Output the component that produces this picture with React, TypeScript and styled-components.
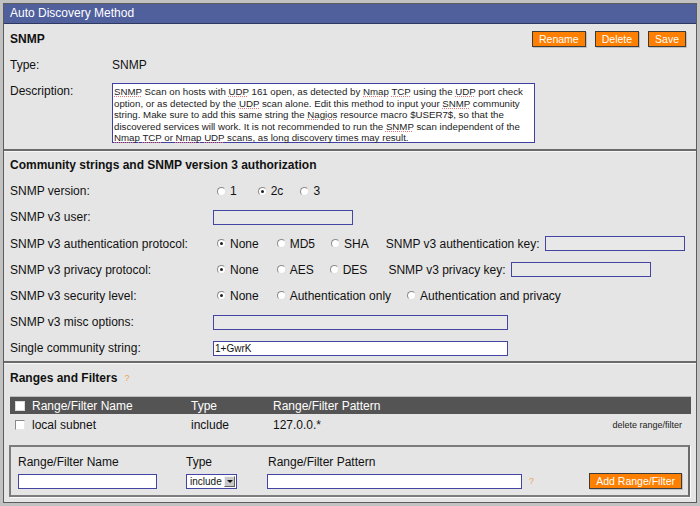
import React from "react";
import styled, { createGlobalStyle } from "styled-components";

const Global = createGlobalStyle`
  html, body { margin: 0; padding: 0; background: #e5e5e5; }
  body { font-family: "Liberation Sans", Arial, sans-serif; font-size: 12px; color: #111; }
  * { box-sizing: border-box; }
`;

const Frame = styled.div`
  width: 700px;
  height: 506px;
  border: 3px solid #c2c2c2;
  background: #e5e5e5;
`;

const Inner = styled.div`
  height: 100%;
  border: 1px solid #5c5c5c;
  display: flex;
  flex-direction: column;
`;

const TitleBar = styled.div`
  height: 20px;
  background: #50609c;
  border-bottom: 1px solid #2e3860;
  color: #fff;
  font-size: 12px;
  line-height: 19px;
  padding-left: 6px;
`;

const Section = styled.div<{ $pt: number; $pb: number; $gap?: number; $pr?: number }>`
  padding: ${(p) => p.$pt}px ${(p) => p.$pr ?? 11}px ${(p) => p.$pb}px 6px;
  display: flex;
  flex-direction: column;
  gap: ${(p) => p.$gap ?? 10}px;
`;

const Divider = styled.div`
  height: 3px;
  flex: none;
  border-top: 2px solid #6a6a6a;
  border-bottom: 1px solid #f6f6f6;
`;

const HeaderRow = styled.div`
  height: 16px;
  display: flex;
  align-items: center;
  justify-content: space-between;
`;

const Heading = styled.div`
  font-weight: bold;
  font-size: 12px;
  display: flex;
  align-items: center;
`;

const Help = styled.span`
  color: #f0a050;
  font-size: 9px;
  font-weight: normal;
  margin-left: 7px;
`;

const Buttons = styled.div`
  display: flex;
  gap: 9px;
`;

const OrangeButton = styled.button`
  height: 16px;
  padding: 0 6px;
  background: #ff8000;
  color: #fff;
  border: 1px solid #3c3c3c;
  box-shadow: 1px 1px 0 #bfbfbf;
  font-family: "Liberation Sans", Arial, sans-serif;
  font-size: 10.5px;
  line-height: 13px;
  cursor: pointer;
`;

const Row = styled.div<{ $label: number; $top?: boolean }>`
  display: grid;
  grid-template-columns: ${(p) => p.$label}px 1fr;
  align-items: ${(p) => (p.$top ? "start" : "center")};
  min-height: 16px;
  line-height: 16px;
`;

const Controls = styled.div`
  display: flex;
  align-items: center;
`;

const DescBox = styled.div`
  width: 423px;
  height: 60px;
  border: 1px solid #4040a4;
  background: #fff;
  font-size: 9.7px;
  line-height: 11.6px;
  padding: 2px 1px;
  white-space: nowrap;
  color: #222;
`;

const Spell = styled.span`
  text-decoration: underline dotted #e87878;
  text-decoration-thickness: 1px;
  text-underline-offset: 1px;
`;

const TextInput = styled.input<{ $w: number; $white?: boolean; $ml?: number }>`
  width: ${(p) => p.$w}px;
  height: 15px;
  margin-left: ${(p) => p.$ml ?? 0}px;
  border: 1px solid #4444a2;
  background: ${(p) => (p.$white ? "#fff" : "#e8e8e8")};
  font-family: "Liberation Sans", Arial, sans-serif;
  font-size: 10px;
  padding: 0 1px;
  outline: none;
  color: #111;
`;

const RadioItem = styled.label<{ $gap: number }>`
  display: flex;
  align-items: center;
  margin-right: ${(p) => p.$gap}px;
`;

const RadioDot = styled.span<{ $on?: boolean }>`
  width: 9px;
  height: 9px;
  border-radius: 50%;
  background: #fff;
  border: 1px solid;
  border-color: #8a8a8a #e0e0e0 #e0e0e0 #8a8a8a;
  margin: 0 4px 0 4px;
  position: relative;
  &::after {
    content: "";
    display: ${(p) => (p.$on ? "block" : "none")};
    position: absolute;
    left: 2px;
    top: 2px;
    width: 3px;
    height: 3px;
    border-radius: 50%;
    background: #222;
  }
`;

const KeyLabel = styled.span<{ $ml: number }>`
  margin-left: ${(p) => p.$ml}px;
  margin-right: 5px;
`;

const TableWrap = styled.div`
  margin-right: -6px;
  display: flex;
  flex-direction: column;
`;

const TableHead = styled.div`
  height: 18px;
  background: #545454;
  color: #fff;
  display: grid;
  grid-template-columns: 17px 159px 82px 1fr;
  align-items: center;
  padding-left: 5px;
  border-top: 1px solid #bdbdbd;
`;

const TableRow = styled.div`
  height: 21px;
  display: grid;
  grid-template-columns: 17px 159px 82px 1fr auto;
  align-items: center;
  padding-left: 5px;
  padding-right: 9px;
`;

const Check = styled.span<{ $filled?: boolean }>`
  width: 10px;
  height: 10px;
  background: #fff;
  border: 1px solid;
  border-color: ${(p) => (p.$filled ? "#dcdcdc" : "#8a8a8a #e8e8e8 #e8e8e8 #8a8a8a")};
`;

const SmallLink = styled.span`
  font-size: 9px;
  color: #222;
`;

const AddBox = styled.div`
  margin-left: -1px;
  margin-right: -5px;
  height: 52px;
  border: 2px solid #7c7c7c;
  border-right-color: #6a6a6a;
  padding: 9px 6px 0 7px;
  display: grid;
  grid-template-columns: 168px 82px 1fr auto;
  grid-template-rows: 12px 16px;
  row-gap: 5px;
  align-items: center;
  box-shadow: 1px 1px 0 #fafafa;
`;

const AddLabel = styled.div`
  line-height: 12px;
`;

const Select = styled.div`
  width: 51px;
  height: 15px;
  border: 1px solid #4444a2;
  background: #fff;
  font-size: 10px;
  display: flex;
  align-items: center;
  justify-content: space-between;
  padding-left: 3px;
  padding-right: 1px;
`;

const SelArrow = styled.span`
  width: 11px;
  height: 11px;
  background: #c8c8c8;
  border: 1px solid;
  border-color: #f0f0f0 #606060 #606060 #f0f0f0;
  display: flex;
  align-items: center;
  justify-content: center;
  &::after {
    content: "";
    border-left: 3px solid transparent;
    border-right: 3px solid transparent;
    border-top: 3px solid #111;
  }
`;

const PatternCell = styled.div`
  display: flex;
  align-items: center;
`;

const Radio = ({ on, label, gap = 14 }: { on?: boolean; label: string; gap?: number }) => (
  <RadioItem $gap={gap}>
    <RadioDot $on={on} />
    {label}
  </RadioItem>
);

export default function App() {
  return (
    <>
      <Global />
      <Frame>
        <Inner>
          <TitleBar>Auto Discovery Method</TitleBar>
          <Section $pt={7} $pb={6} $pr={10}>
            <HeaderRow>
              <Heading>SNMP</Heading>
              <Buttons>
                <OrangeButton>Rename</OrangeButton>
                <OrangeButton>Delete</OrangeButton>
                <OrangeButton>Save</OrangeButton>
              </Buttons>
            </HeaderRow>
            <Row $label={102}>
              <span>Type:</span>
              <span>SNMP</span>
            </Row>
            <Row $label={102} $top>
              <span>Description:</span>
              <DescBox>
                <Spell>SNMP</Spell> Scan on hosts with <Spell>UDP</Spell> 161 open, as detected by <Spell>Nmap</Spell>{" "}
                <Spell>TCP</Spell> using the <Spell>UDP</Spell> port check
                <br />
                option, or as detected by the <Spell>UDP</Spell> scan alone. Edit this method to input your{" "}
                <Spell>SNMP</Spell> community
                <br />
                string. Make sure to add this same string the <Spell>Nagios</Spell> resource macro $USER7$, so that the
                <br />
                discovered services will work. It is not recommended to run the <Spell>SNMP</Spell> scan independent of
                the
                <br />
                <Spell>Nmap</Spell> <Spell>TCP</Spell> or <Spell>Nmap</Spell> <Spell>UDP</Spell> scans, as long
                discovery times may result.
              </DescBox>
            </Row>
          </Section>
          <Divider />
          <Section $pt={5} $pb={5} $gap={10.2}>
            <HeaderRow>
              <Heading>Community strings and SNMP version 3 authorization</Heading>
            </HeaderRow>
            <Row $label={203}>
              <span>SNMP version:</span>
              <Controls>
                <Radio label="1" gap={17} />
                <Radio label="2c" on gap={13} />
                <Radio label="3" />
              </Controls>
            </Row>
            <Row $label={203}>
              <span>SNMP v3 user:</span>
              <Controls>
                <TextInput $w={140} />
              </Controls>
            </Row>
            <Row $label={203}>
              <span>SNMP v3 authentication protocol:</span>
              <Controls>
                <Radio label="None" on gap={14} />
                <Radio label="MD5" gap={12} />
                <RadioItem $gap={0}>
                  <RadioDot />
                  SHA
                </RadioItem>
                <KeyLabel $ml={17}>SNMP v3 authentication key:</KeyLabel>
                <TextInput $w={140} />
              </Controls>
            </Row>
            <Row $label={203}>
              <span>SNMP v3 privacy protocol:</span>
              <Controls>
                <Radio label="None" on gap={14} />
                <Radio label="AES" gap={12} />
                <RadioItem $gap={0}>
                  <RadioDot />
                  DES
                </RadioItem>
                <KeyLabel $ml={21}>SNMP v3 privacy key:</KeyLabel>
                <TextInput $w={140} />
              </Controls>
            </Row>
            <Row $label={203}>
              <span>SNMP v3 security level:</span>
              <Controls>
                <Radio label="None" on gap={14} />
                <Radio label="Authentication only" gap={12} />
                <Radio label="Authentication and privacy" />
              </Controls>
            </Row>
            <Row $label={203}>
              <span>SNMP v3 misc options:</span>
              <Controls>
                <TextInput $w={295} />
              </Controls>
            </Row>
            <Row $label={203}>
              <span>Single community string:</span>
              <Controls>
                <TextInput $w={295} $white defaultValue="1+GwrK" />
              </Controls>
            </Row>
          </Section>
          <Divider />
          <Section $pt={6} $pb={4}>
            <HeaderRow>
              <Heading>
                Ranges and Filters<Help>?</Help>
              </Heading>
            </HeaderRow>
            <TableWrap>
              <TableHead>
                <Check $filled />
                <span>Range/Filter Name</span>
                <span>Type</span>
                <span>Range/Filter Pattern</span>
              </TableHead>
              <TableRow>
                <Check />
                <span>local subnet</span>
                <span>include</span>
                <span>127.0.0.*</span>
                <SmallLink>delete range/filter</SmallLink>
              </TableRow>
            </TableWrap>
            <AddBox>
              <AddLabel>Range/Filter Name</AddLabel>
              <AddLabel>Type</AddLabel>
              <AddLabel>Range/Filter Pattern</AddLabel>
              <span />
              <TextInput $w={139} $white />
              <Select>
                include
                <SelArrow />
              </Select>
              <PatternCell>
                <TextInput $w={255} $white $ml={-1} />
                <Help>?</Help>
              </PatternCell>
              <OrangeButton>Add Range/Filter</OrangeButton>
            </AddBox>
          </Section>
        </Inner>
      </Frame>
    </>
  );
}
